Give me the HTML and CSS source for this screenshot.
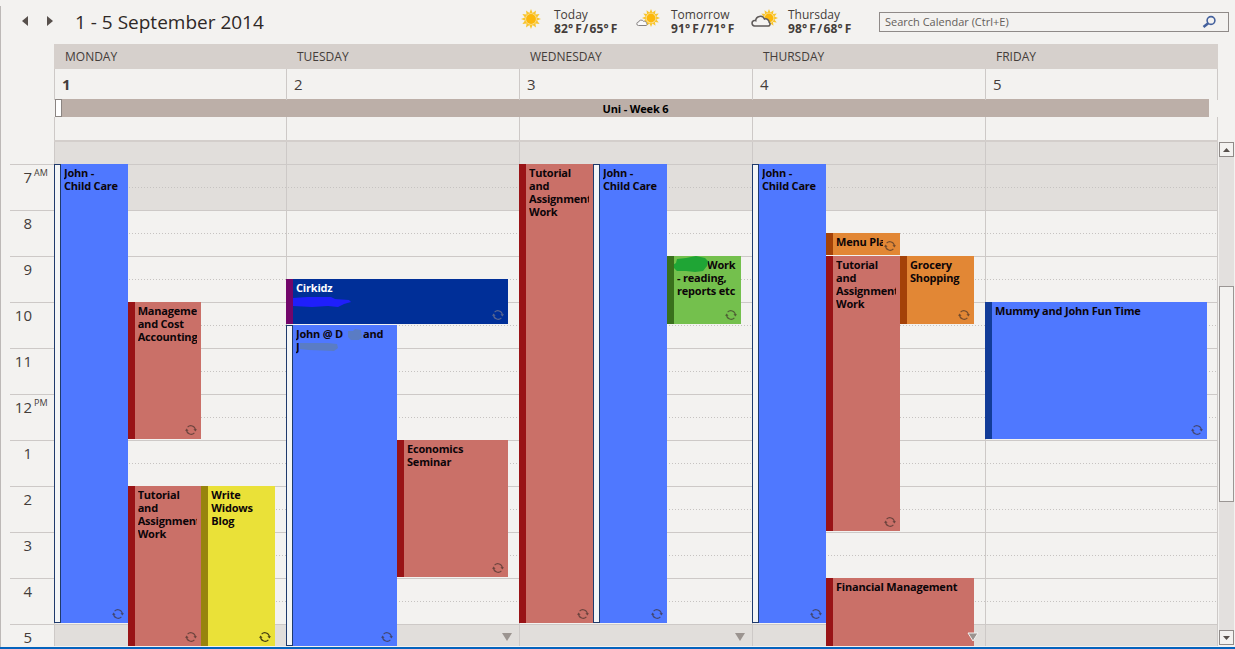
FILE: index.html
```html
<!DOCTYPE html>
<html lang="en">
<head>
    <meta charset="UTF-8">
    <meta name="viewport" content="width=device-width, initial-scale=1.0">
    <title>Calendar</title>
    <link rel="stylesheet" href="styles.css">
</head>
<body>
    <!-- Shared icons -->
    <svg class="defs" width="0" height="0">
        <symbol id="recur" viewBox="0 0 12 12">
            <path d="M2.600 3.200A4.500 4.500 0 0 1 10.400 5.600M9.400 8.800A4.500 4.500 0 0 1 1.600 6.400" fill="none" stroke="currentColor" stroke-width="1.100"/>
            <path d="M8.400 5.200h3.600L10.400 7.600zM0 6.800h3.600L1.600 4.400z" fill="currentColor"/>
        </symbol>
        <symbol id="sun" viewBox="0 0 20 20">
            <path d="M10 0l1.600 4L15 1.400l-.6 4.200 4.200-.6L16 8.400l4 1.600-4 1.600 2.600 3.400-4.200-.6.6 4.200-3.400-2.600L10 20l-1.600-4L5 18.600l.6-4.200-4.200.6L4 11.600 0 10l4-1.600L1.400 5l4.200.6L5 1.400 8.400 4z" fill="#f8c52c"/>
            <circle cx="10" cy="10" r="5.800" fill="#fae09a"/>
            <circle cx="10" cy="10" r="4.900" fill="#fcb80c"/>
        </symbol>
    </svg>

    <div class="calendar">
        <div class="toolbar">
            <div class="nav">
                <svg width="6" height="10"><path d="M6 0v10L0 5z" fill="#57504c"/></svg>
                <svg width="6" height="10"><path d="M0 0v10l6-5z" fill="#57504c"/></svg>
            </div>
            <h1>1 - 5 September 2014</h1>
            <div class="weather">
                <div class="forecast">
                    <svg width="34" height="26"><use href="#sun" x="11" y="5" width="20" height="20"/></svg>
                    <div><p>Today</p><p class="temp">82°&thinsp;F&hairsp;/&hairsp;65°&thinsp;F</p></div>
                </div>
                <div class="forecast">
                    <svg width="34" height="26">
                        <use href="#sun" x="15" y="5" width="18" height="18"/>
                        <path d="M11.500 21.500a1.700 1.700 0 0 1 0-3.400 2.800 2.800 0 0 1 5-.8 2.200 2.200 0 0 1 3 2 1.200 1.200 0 0 1-.3 2.200z" fill="#fafafa" stroke="#858181"/>
                    </svg>
                    <div><p>Tomorrow</p><p class="temp">91°&thinsp;F&hairsp;/&hairsp;71°&thinsp;F</p></div>
                </div>
                <div class="forecast">
                    <svg width="36" height="26">
                        <use href="#sun" x="16" y="5" width="18" height="18"/>
                        <path d="M10.500 22a2.800 2.800 0 0 1-.3-5.500c.8 0 1.200 0 1.500.2a4.600 4.600 0 0 1 8.800-1.600 3.500 3.500 0 0 1 4.700 3.300 2 2 0 0 1-.8 3.600z" fill="#f4f3f1" stroke="#5f5b5a" stroke-width="1.500"/>
                    </svg>
                    <div><p>Thursday</p><p class="temp">98°&thinsp;F&hairsp;/&hairsp;68°&thinsp;F</p></div>
                </div>
            </div>
            <div class="search">
                <span>Search Calendar (Ctrl+E)</span>
                <svg width="14" height="14" fill="none" stroke="#44619d"><circle cx="9" cy="5.500" r="3.900" stroke-width="1.600"/><path d="M6.200 8.200L1.500 12" stroke-width="2.600"/></svg>
            </div>
        </div>

        <div class="header">
            <div class="days names">
                <div>MONDAY</div><div>TUESDAY</div><div>WEDNESDAY</div><div>THURSDAY</div><div>FRIDAY</div>
            </div>
            <div class="days dates">
                <div><b>1</b></div><div>2</div><div>3</div><div>4</div><div>5</div>
            </div>
            <div class="all-day"><i></i><span>Uni - Week 6</span></div>
            <div class="days spacer">
                <div></div><div></div><div></div><div></div><div></div>
            </div>
        </div>

        <div class="body">
            <div class="hours">
                <div></div>
                <div>7<sup>AM</sup></div>
                <div>8</div>
                <div>9</div>
                <div>10</div>
                <div>11</div>
                <div>12<sup>PM</sup></div>
                <div>1</div>
                <div>2</div>
                <div>3</div>
                <div>4</div>
                <div>5</div>
            </div>
            <div class="days grid">
                <div class="day">
                    <div class="event blue free mon-care"><p>John -<br>Child Care</p><svg class="recur"><use href="#recur"/></svg></div>
                    <div class="event red mon-accounting"><p>Manageme<br>and Cost<br>Accounting</p><svg class="recur"><use href="#recur"/></svg></div>
                    <div class="event red mon-tutorial"><p>Tutorial<br>and<br>Assignment<br>Work</p><svg class="recur"><use href="#recur"/></svg></div>
                    <div class="event yellow mon-blog"><p>Write<br>Widows<br>Blog</p><svg class="recur"><use href="#recur"/></svg></div>
                </div>
                <div class="day">
                    <div class="event navy tue-cirkidz">
                        <p>Cirkidz</p>
                        <svg class="scribble" width="60" height="12"><path d="M0 2l14-1 24 0 4 2 14 1 2 2-7 2-6 3-10-1-16 1-19-1z" fill="#1f1ffb"/></svg>
                        <svg class="recur"><use href="#recur"/></svg>
                    </div>
                    <div class="event blue free tue-john">
                        <p>John @ D<svg class="smudge" width="20" height="13"><path d="M5 4l5 0 2-2 6 1 1 8-5 3-6-1-3-3z" fill="#5a7cc4"/></svg>and<br>J<svg class="smudge" width="40" height="12"><path d="M1 3l28 0 9 1 1 4-4 3-25-1-9-1z" fill="#5a7cc4"/></svg></p>
                        <svg class="recur"><use href="#recur"/></svg>
                    </div>
                    <div class="event red tue-seminar"><p>Economics<br>Seminar</p><svg class="recur"><use href="#recur"/></svg></div>
                    <svg class="more" width="12" height="10"><path d="M1 1h10L6 9z"/></svg>
                </div>
                <div class="day">
                    <div class="event red wed-tutorial"><p>Tutorial<br>and<br>Assignment<br>Work</p><svg class="recur"><use href="#recur"/></svg></div>
                    <div class="event blue free wed-care"><p>John -<br>Child Care</p><svg class="recur"><use href="#recur"/></svg></div>
                    <div class="event green wed-work">
                        <p><span class="indent">Work</span><br>- reading,<br>reports etc</p>
                        <svg class="blot" width="36" height="17"><path d="M0 9l3-2 1-4 9-1 10-2 9 2 3 3-1 5-4 5-8 1-9-1-9 0-3-3z" fill="#1fa535"/></svg>
                        <svg class="recur"><use href="#recur"/></svg>
                    </div>
                    <svg class="more" width="12" height="10"><path d="M1 1h10L6 9z"/></svg>
                </div>
                <div class="day">
                    <div class="event blue free thu-care"><p>John -<br>Child Care</p><svg class="recur"><use href="#recur"/></svg></div>
                    <div class="event orange thu-menu"><p>Menu Plan</p><svg class="recur"><use href="#recur"/></svg></div>
                    <div class="event red thu-tutorial"><p>Tutorial<br>and<br>Assignment<br>Work</p><svg class="recur"><use href="#recur"/></svg></div>
                    <div class="event orange thu-grocery"><p>Grocery<br>Shopping</p><svg class="recur"><use href="#recur"/></svg></div>
                    <div class="event red thu-finance"><p>Financial Management</p></div>
                    <svg class="more outlined" width="12" height="10"><path d="M1 1h10L6 9z"/></svg>
                </div>
                <div class="day">
                    <div class="event blue fri-fun"><p>Mummy and John Fun Time</p><svg class="recur"><use href="#recur"/></svg></div>
                </div>
            </div>
            <div class="scrollbar">
                <div class="arrow"><svg width="7" height="4"><path d="M0 4h7L3.500 0z" fill="#57504c"/></svg></div>
                <div class="track"><div class="thumb"></div></div>
                <div class="arrow"><svg width="7" height="4"><path d="M0 0h7L3.500 4z" fill="#57504c"/></svg></div>
            </div>
        </div>
    </div>
</body>
</html>
```
FILE: styles.css
```css
*, *::before {
    box-sizing: border-box;
}
body {
    margin: 0;
    background-color: #f3f2f0;
    font-family: "Open Sans", "Noto Sans", sans-serif;
    color: #443d3a;
    overflow: hidden;
}
p, h1 {
    margin: 0;
}
.defs {
    display: block;
}
.calendar {
    height: 649px;
    display: flex;
    flex-direction: column;
    border-bottom: 2px solid #0563bd;
    background: linear-gradient(#bdb9b7, #bdb9b7) 0 6px / 1px 100% no-repeat;
}

/* Toolbar */
.toolbar {
    height: 44px;
    display: flex;
    flex: none;
}
.nav {
    display: flex;
    gap: 19px;
    padding: 16px 0 0 22px;
    width: 75px;
}
h1 {
    width: 435px;
    font-size: 19px;
    font-weight: normal;
    line-height: 44px;
    color: #2e2826;
}
.weather {
    display: flex;
    width: 369px;
    padding-top: 4px;
}
.forecast {
    display: flex;
    width: 117px;
}
.forecast svg {
    flex: none;
    width: 44px;
}
.forecast p {
    padding-top: 2px;
    font-size: 12px;
    line-height: 17px;
    white-space: nowrap;
}
.forecast .temp {
    padding: 0;
    margin-top: -3px;
    font-weight: bold;
    letter-spacing: 0.1px;
}
.search {
    width: 350px;
    height: 20px;
    margin-top: 12px;
    padding: 0 12px 0 5px;
    border: 1px solid #8f8a88;
    display: flex;
    justify-content: space-between;
    align-items: center;
    font-size: 11px;
    color: #655e5a;
}
.search span {
    margin-top: -2px;
}

/* Day header */
.header {
    flex: none;
    height: 98px;
    margin: 0 17px 0 54px;
    border-bottom: 2px solid #d3cecb;
}
.days {
    display: grid;
    grid-template-columns: 232px 233px 233px 233px 233px;
}
.days > div {
    box-shadow: inset 1px 0 #cdc9c7;
}
.days > div:last-child {
    box-shadow: inset 1px 0 #cdc9c7, inset -1px 0 #cdc9c7;
}
.names {
    height: 25px;
    font-size: 12px;
    line-height: 25px;
}
.names > div,
.names > div:last-child {
    padding-left: 11px;
    background-color: #d6d0cc;
    box-shadow: none;
}
.dates {
    height: 30px;
    font-size: 15px;
    line-height: 31px;
}
.dates > div {
    padding-left: 8px;
}
.all-day {
    display: flex;
    height: 18px;
    margin: 0 9px 0 1px;
    background-color: #bcafa8;
    color: #000;
    font-size: 11px;
    font-weight: bold;
    letter-spacing: -0.15px;
    line-height: 19px;
}
.all-day i {
    width: 7px;
    border: 1px solid #8b8582;
    background-color: #fff;
}
.all-day span {
    flex: 1;
    text-align: center;
}
.spacer {
    height: 23px;
}

/* Time grid */
.body {
    display: flex;
    height: 504px;
    overflow: hidden;
}
.hours {
    width: 44px;
    margin: -1px 0 0 10px;
    font-size: 15px;
    line-height: 24px;
}
.hours div {
    height: 46px;
    border-top: 1px solid #cdc9c7;
    padding-right: 22px;
    text-align: right;
    position: relative;
}
.hours div:first-child {
    height: 23px;
}
.hours sup {
    position: absolute;
    left: 24px;
    top: 3px;
    font-size: 9px;
    line-height: 10px;
}
/* dotted half hours, solid hours, then the shading outside work hours */
.grid {
    background:
        radial-gradient(circle at 0.5px 45.5px, #c6c3c1 0.8px, transparent 0.8px) 0 0 / 3px 46px,
        linear-gradient(#cdc9c7 1px, transparent 1px) 0 22px / 100% 46px,
        linear-gradient(#e1dedb 68px, #f3f2f0 68px, #f3f2f0 482px, #e1dedb 482px);
}
.day {
    display: grid;
    grid-template-columns: repeat(6, 1fr);
    grid-template-rows: 22px repeat(21, 23px);
    height: 505px;
    padding-right: 11px;
    position: relative;
}
.event {
    position: relative;
    margin-bottom: 1px;
    padding: 2px 4px 0 3px;
    border-left: 7px solid;
    color: #0c0508;
    font-size: 11px;
    font-weight: bold;
    letter-spacing: -0.2px;
    line-height: 13px;
    overflow: hidden;
    min-width: 0;
}
.event p {
    overflow: hidden;
    padding-bottom: 3px;
}
.blue {
    background-color: #4f78ff;
    border-color: #123c98;
}
.red {
    background-color: #ca7068;
    border-color: #991316;
}
.yellow {
    background-color: #eae138;
    border-color: #98840c;
}
.green {
    background-color: #74c04d;
    border-color: #39701c;
}
.orange {
    background-color: #e28735;
    border-color: #a44208;
}
.navy {
    background-color: #002f98;
    border-color: #72066a;
    color: #fff;
}
/* Free time gets a hollow bar instead of a solid one */
.free {
    border-left: 0;
    padding-left: 10px;
}
.free::before {
    content: "";
    position: absolute;
    left: 0;
    top: 0;
    bottom: 0;
    width: 7px;
    border: 1px solid #1f3a6c;
    background-color: #f3f5f6;
}
.recur {
    position: absolute;
    right: 4px;
    bottom: 3px;
    width: 12px;
    height: 12px;
    color: rgba(60, 45, 40, 0.65);
}
.navy .recur {
    color: #5a6790;
}
.yellow .recur {
    color: #443d12;
}
.scribble {
    position: absolute;
    left: 0;
    top: 17px;
}
.smudge {
    vertical-align: top;
}
.indent {
    padding-left: 30px;
}
.blot {
    position: absolute;
    left: -1px;
    top: 0;
}
.more {
    position: absolute;
    right: 6px;
    bottom: 5px;
    fill: #9b9490;
}
.outlined path {
    stroke: #f3f2f0;
}

/* rows: 2 is 7 AM, two per hour */
.mon-care { grid-area: 2 / 1 / 22 / 3; }
.mon-accounting { grid-area: 8 / 3 / 14 / 5; }
.mon-tutorial { grid-area: 16 / 3 / 23 / 5; }
.mon-blog { grid-area: 16 / 5 / 23 / 7; }
.tue-cirkidz { grid-area: 7 / 1 / 9 / 7; }
.tue-john { grid-area: 9 / 1 / 23 / 4; }
.tue-seminar { grid-area: 14 / 4 / 20 / 7; }
.wed-tutorial { grid-area: 2 / 1 / 22 / 3; }
.wed-care { grid-area: 2 / 3 / 22 / 5; }
.wed-work { grid-area: 6 / 5 / 9 / 7; }
.thu-care { grid-area: 2 / 1 / 22 / 3; }
.thu-menu { grid-area: 5 / 3 / 6 / 5; }
.thu-menu p { margin-right: 13px; white-space: nowrap; }
.thu-tutorial { grid-area: 6 / 3 / 18 / 5; }
.thu-grocery { grid-area: 6 / 5 / 9 / 7; }
.thu-finance { grid-area: 20 / 3 / 23 / 7; }
.fri-fun { grid-area: 8 / 1 / 14 / 7; }

/* Scrollbar */
.scrollbar {
    width: 15px;
    height: 503px;
    margin-left: 1px;
    display: flex;
    flex-direction: column;
    background-color: #e3e0de;
}
.arrow {
    height: 15px;
    flex: none;
    display: flex;
    align-items: center;
    justify-content: center;
    border: 1px solid #8f8a88;
    background-color: #f3f2f0;
}
.track {
    flex: 1;
    padding-top: 129px;
}
.thumb {
    height: 216px;
    border: 1px solid #9b9694;
    background-color: #f3f2f0;
}
```
